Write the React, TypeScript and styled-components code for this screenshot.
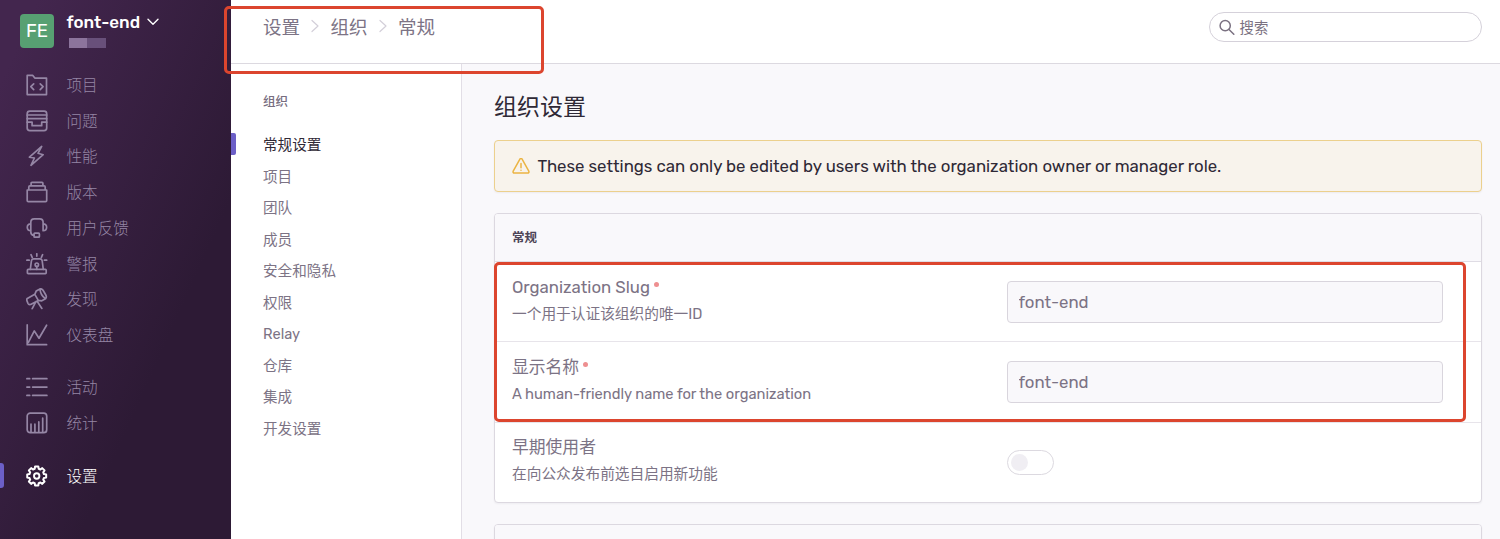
import React from 'react';
import styled, { createGlobalStyle, css } from 'styled-components';

const GlobalStyle = createGlobalStyle`
  *, *::before, *::after { box-sizing: border-box; }
  html, body { margin: 0; padding: 0; overflow: hidden; }
  body {
    font-family: Rubik, Roboto, "Noto Sans CJK SC", sans-serif;
    color: #7c7385;
    background: #f9f8fb;
    -webkit-font-smoothing: antialiased;
  }
`;

const Page = styled.div`
  position: relative;
  display: grid;
  grid-template-columns: 231px 1fr;
  width: 1500px;
  height: 539px;
  overflow: hidden;
`;

/* Primary sidebar */
const Sidebar = styled.aside`
  background: linear-gradient(294.17deg, #2d1a35 35.57%, #43264e 92.42%);
  display: flex;
  flex-direction: column;
`;

const OrgHeader = styled.div`
  display: flex;
  align-items: flex-start;
  gap: 12.5px;
  height: 67px;
  padding: 14px 0 0 20px;
`;

const Avatar = styled.div`
  width: 34px;
  height: 34px;
  border-radius: 4px;
  background: #57a072;
  color: #fff;
  font-size: 18.5px;
  line-height: 35px;
  text-align: center;
`;

const OrgName = styled.div`
  display: flex;
  align-items: center;
  gap: 7px;
  height: 16px;
  color: #fff;
  font-size: 17px;
  font-weight: 500;
  white-space: nowrap;
`;

const HiddenUser = styled.div`
  display: flex;
  margin: 8px 0 0 2px;
`;

const Mosaic = styled.span<{ $tone: string }>`
  width: 18.5px;
  height: 10px;
  background: ${p => p.$tone};
`;

const NavGroup = styled.nav<{ $gap?: number }>`
  display: flex;
  flex-direction: column;
  margin-top: ${p => p.$gap ?? 0}px;
`;

const NavItem = styled.a<{ $active?: boolean }>`
  position: relative;
  display: flex;
  align-items: center;
  gap: 18.5px;
  height: 35.75px;
  padding-left: 26px;
  font-size: 15.6px;
  line-height: 20px;
  font-weight: 300;
  color: #9586a5;
  svg { flex: none; }
  ${p => p.$active && css`
    color: #fff;
    &::before {
      content: '';
      position: absolute;
      left: 0;
      top: 5px;
      width: 4px;
      height: 25px;
      border-radius: 0 3px 3px 0;
      background: #6c5fc7;
    }
  `}
`;

const NavLabel = styled.span`
  padding-top: 2px;
`;

/* Right-hand side */
const Main = styled.div`
  display: grid;
  grid-template-rows: 64px 1fr;
  min-width: 0;
`;

const TopBar = styled.header`
  display: flex;
  justify-content: space-between;
  align-items: flex-start;
  padding: 12px 18px 0 32px;
  background: #fff;
  border-bottom: 1px solid #dcd9e0;
`;

const Breadcrumbs = styled.div`
  display: flex;
  align-items: center;
  gap: 11.25px;
  height: 28px;
  font-size: 18.5px;
  color: #7c7385;
`;

const SearchBox = styled.label`
  display: flex;
  align-items: center;
  gap: 5px;
  width: 273.5px;
  height: 30px;
  padding: 0 0 1px 9px;
  border: 1px solid #d5d1da;
  border-radius: 15px;
  font-size: 14.4px;
  color: #7a7181;
`;

const Body = styled.div`
  display: grid;
  grid-template-columns: 231px 1fr;
  min-height: 0;
`;

const SettingsNav = styled.nav`
  display: flex;
  flex-direction: column;
  padding: 28px 0 0 32px;
  background: #fff;
  border-right: 1px solid #e2dee6;
`;

const NavHeading = styled.div`
  height: 20px;
  margin-bottom: 18px;
  font-size: 12.5px;
  line-height: 20px;
  font-weight: 500;
  color: #776e80;
`;

const SettingsLink = styled.a<{ $active?: boolean }>`
  position: relative;
  height: 31.5px;
  font-size: 14.6px;
  line-height: 31.5px;
  color: ${p => (p.$active ? '#2f2936' : '#7c7385')};
  ${p => p.$active && css`
    &::before {
      content: '';
      position: absolute;
      left: -32px;
      top: 3px;
      width: 4.5px;
      height: 22px;
      border-radius: 0 2px 2px 0;
      background: #6c5fc7;
    }
  `}
`;

const Content = styled.main`
  padding: 25px 18px 0 32px;
  min-width: 0;
`;

const Title = styled.h1`
  margin: 0 0 15px;
  height: 36px;
  font-size: 23px;
  line-height: 36px;
  font-weight: 400;
  color: #2f2936;
`;

const Alert = styled.div`
  display: flex;
  align-items: center;
  gap: 8px;
  height: 52px;
  margin-bottom: 21px;
  padding-left: 16.5px;
  border: 1px solid #ecd08d;
  border-radius: 4px;
  background: #f8f3ec;
  box-shadow: 0 1px 2px rgba(43, 34, 51, 0.06);
  color: #2f2936;
  font-size: 16.8px;
  white-space: nowrap;
`;

const Panel = styled.section`
  margin-bottom: 21px;
  border: 1px solid #dcd8e0;
  border-radius: 4px;
  background: #fff;
  box-shadow: 0 1px 2px rgba(43, 34, 51, 0.05);
`;

const PanelHeader = styled.div`
  height: 48px;
  padding-left: 17px;
  border-bottom: 1px solid #dfdce4;
  border-radius: 3px 3px 0 0;
  background: #f9f8fb;
  font-size: 12.5px;
  line-height: 47px;
  font-weight: 700;
  color: #4d4456;
`;

const Field = styled.div`
  display: grid;
  grid-template-columns: 494.5px 436.5px;
  align-items: center;
  height: 79.4px;
  padding-left: 17px;
  & + & {
    height: 80.3px;
    border-top: 1px solid #e7e4ea;
  }
`;

const FieldText = styled.div`
  padding-bottom: 2px;
`;

const FieldLabel = styled.div`
  display: flex;
  gap: 4px;
  height: 25px;
  font-size: 16.8px;
  line-height: 25px;
  color: #7c7385;
`;

const Required = styled.span`
  width: 5px;
  height: 5px;
  margin-top: 7px;
  border-radius: 50%;
  background: #ee8f90;
`;

const Help = styled.div`
  height: 25px;
  margin-top: 2px;
  font-size: 14.7px;
  line-height: 25px;
  color: #7c7385;
`;

const Input = styled.input`
  width: 100%;
  height: 42px;
  padding: 0 11px;
  border: 1px solid #d9d5dd;
  border-radius: 4px;
  background: #f9f8fb;
  color: #7c7385;
  font: inherit;
  font-size: 16.8px;
`;

const Toggle = styled.span`
  display: flex;
  align-items: center;
  width: 47px;
  height: 25px;
  padding-left: 3px;
  border: 1px solid #dcd9e0;
  border-radius: 13px;
  background: #fff;
  &::before {
    content: '';
    width: 17px;
    height: 17px;
    border-radius: 50%;
    background: #f0eef3;
  }
`;

/* Red outlines drawn over the page */
const Highlight = styled.div<{ $x: number; $y: number; $w: number; $h: number }>`
  position: absolute;
  left: ${p => p.$x}px;
  top: ${p => p.$y}px;
  width: ${p => p.$w}px;
  height: ${p => p.$h}px;
  border: 3px solid #dc452e;
  border-radius: 5px;
  pointer-events: none;
`;

const gearPath = (() => {
  const pts: string[] = [];
  for (let i = 0; i < 8; i++) {
    const base = (i * Math.PI) / 4 - Math.PI / 2;
    [[-0.27, 7.5], [-0.17, 9.6], [0.17, 9.6], [0.27, 7.5]].forEach(([d, r]) => {
      pts.push(`${(10.7 + r * Math.cos(base + d)).toFixed(2)} ${(11 + r * Math.sin(base + d)).toFixed(2)}`);
    });
  }
  return `M${pts.join('L')}Z`;
})();

const icons: Record<string, React.ReactNode> = {
  projects: <path d="M1.2 1.4h5.6l2 2.7h11.7v16.5H1.2ZM7.700 9.800l-2.900 2.900L7.700 15.600M14.200 9.800l2.900 2.900-2.900 2.900" />,
  issues: <><rect x="1.2" y="1.1" width="19.5" height="19.6" rx="2.6" /><path d="M1.2 5h19.5M1.2 8.7h19.5M1.2 12.2h4.9v3.5h9.6v-3.5h5" /></>,
  performance: <path d="M15.700 1.400 3.400 12.100l5 .9L5 20.300 17.200 9.700l-5.200-1.400Z" />,
  releases: <path d="M1.2 9h19.5v10.6q0 1.1-1.1 1.1H2.3q-1.1 0-1.1-1.1ZM2.8 9V6q0-1.1 1.1-1.1h14.2q1.100 0 1.100 1.100v3M5.1 4.900V2.200q0-.9.9-.9h10q.9 0 .9.9v2.700" />,
  feedback: <><path d="M4.8 13.7V5.200q0-3.400 3.400-3.400h5.500q3.400 0 3.400 3.400v8.500M4.800 6.800C.1 7 .1 13.600 4.800 13.700M17.100 6.800c4.700.2 4.700 6.800 0 6.900M4.800 13.700v1.200q0 3.300 3.200 3.300" /><rect x="8" y="16.1" width="5.4" height="4.1" rx=".8" /></>,
  alerts: <><path d="M4.3 16.300 5.400 8q.3-2.200 2.400-2.200h6q2.100 0 2.400 2.200l1.100 8.300M10.800 13.400v2.900M10.800.8v2.300M5 1.700l1.200 2.600M16.600 1.700l-1.200 2.600M.9 7.200h2.300M18.400 7.200h2.300" /><circle cx="10.8" cy="11.7" r="1.7" /><rect x="1.4" y="16.4" width="18.8" height="4.2" rx=".8" /></>,
  discover: <path d="m1.3 10.500 7.500-4.200 3.500 6.100-7.700 4.100q-2 .5-2.700-1.200L.9 12.600q-.5-1.300.4-2.100ZM8.800 6.300l1.400-3.200 3.800-2.200q2-.5 3.200 1.600l2.600 4.500q1.200 2.200-.3 3.800l-3.700 2-3.500-.4M14 .9c.2 3.600 2 7.400 5.500 9.900M9.900 13.700 6.200 20.700M11.100 13.300l4.800 7.100" />,
  dashboards: <path d="M1.2.9v19.800h19.400M2.400 18.400 8.300 6.900l4.700 7.300 7.600-13" />,
  activity: <path d="M.9 2.700h2.800M6.600 2.700h14.300M.9 11.100h2.800M6.600 11.100h14.300M.9 19.400h2.800M6.600 19.400h14.300" />,
  stats: <><rect x="1.2" y="1.1" width="19.5" height="19.6" rx="3" /><path d="M5 12.200v8M8.900 12.200v8M12.800 9.900v10.300M16.700 6.200v14" /></>,
  settings: <><path d={gearPath} strokeWidth="2" /><circle cx="10.7" cy="11" r="2.7" strokeWidth="1.9" /></>,
};

const Icon = ({ name }: { name: string }) => (
  <svg width="22" height="22" viewBox="0 0 22 22" fill="none" stroke="currentColor" strokeWidth="1.7" strokeLinecap="round" strokeLinejoin="round">
    {icons[name]}
  </svg>
);

const Chevron = () => (
  <svg width="8" height="14" viewBox="0 0 8 14" fill="none" stroke="#d3cfd9" strokeWidth="1.2" strokeLinecap="round" strokeLinejoin="round">
    <path d="m1 1.5 6 5.5-6 5.5" />
  </svg>
);

const primaryNav = [
  ['projects', '项目'], ['issues', '问题'], ['performance', '性能'], ['releases', '版本'],
  ['feedback', '用户反馈'], ['alerts', '警报'], ['discover', '发现'], ['dashboards', '仪表盘'],
];
const secondaryNav = [['activity', '活动'], ['stats', '统计']];
const settingsLinks = ['常规设置', '项目', '团队', '成员', '安全和隐私', '权限', 'Relay', '仓库', '集成', '开发设置'];

export default function App() {
  return (
    <Page>
      <GlobalStyle />
      <Sidebar>
        <OrgHeader>
          <Avatar>FE</Avatar>
          <div>
            <OrgName>
              font-end
              <svg width="12" height="8" viewBox="0 0 12 8" fill="none" stroke="currentColor" strokeWidth="1.4" strokeLinecap="round" strokeLinejoin="round"><path d="m1 1.2 5 5 5-5" /></svg>
            </OrgName>
            <HiddenUser><Mosaic $tone="#8c749c" /><Mosaic $tone="#68507a" /></HiddenUser>
          </div>
        </OrgHeader>
        <NavGroup>
          {primaryNav.map(([icon, label]) => <NavItem key={icon}><Icon name={icon} /><NavLabel>{label}</NavLabel></NavItem>)}
        </NavGroup>
        <NavGroup $gap={16.5}>
          {secondaryNav.map(([icon, label]) => <NavItem key={icon}><Icon name={icon} /><NavLabel>{label}</NavLabel></NavItem>)}
        </NavGroup>
        <NavGroup $gap={17}>
          <NavItem $active><Icon name="settings" /><NavLabel>设置</NavLabel></NavItem>
        </NavGroup>
      </Sidebar>
      <Main>
        <TopBar>
          <Breadcrumbs>
            <span>设置</span><Chevron /><span>组织</span><Chevron /><span>常规</span>
          </Breadcrumbs>
          <SearchBox>
            <svg width="16" height="16" viewBox="0 0 16 16" fill="none" stroke="currentColor" strokeWidth="1.5" strokeLinecap="round"><circle cx="6.2" cy="6.7" r="5.1" /><path d="m10 10.500 4.800 4.800" /></svg>
            搜索
          </SearchBox>
        </TopBar>
        <Body>
          <SettingsNav>
            <NavHeading>组织</NavHeading>
            {settingsLinks.map((label, i) => <SettingsLink key={label} $active={i === 0}>{label}</SettingsLink>)}
          </SettingsNav>
          <Content>
            <Title>组织设置</Title>
            <Alert>
              <svg width="18" height="17" viewBox="0 0 18 17" fill="none" stroke="#ebb443" strokeWidth="1.5" strokeLinecap="round" strokeLinejoin="round"><path d="M7.9 1.100q1.100-1.300 2.200 0l6.700 12q.6 1.800-1.300 2H2.500q-1.900-.2-1.300-2ZM9 5.500v4.200M9 12.200v.1" /></svg>
              These settings can only be edited by users with the organization owner or manager role.
            </Alert>
            <Panel>
              <PanelHeader>常规</PanelHeader>
              <Field>
                <FieldText>
                  <FieldLabel>Organization Slug<Required /></FieldLabel>
                  <Help>一个用于认证该组织的唯一ID</Help>
                </FieldText>
                <Input value="font-end" disabled readOnly />
              </Field>
              <Field>
                <FieldText>
                  <FieldLabel>显示名称<Required /></FieldLabel>
                  <Help>A human-friendly name for the organization</Help>
                </FieldText>
                <Input value="font-end" disabled readOnly />
              </Field>
              <Field>
                <FieldText>
                  <FieldLabel>早期使用者</FieldLabel>
                  <Help>在向公众发布前选自启用新功能</Help>
                </FieldText>
                <Toggle />
              </Field>
            </Panel>
            <Panel><PanelHeader /></Panel>
          </Content>
        </Body>
      </Main>
      <Highlight $x={224} $y={6} $w={320} $h={68} />
      <Highlight $x={494} $y={262} $w={972} $h={160} />
    </Page>
  );
}
